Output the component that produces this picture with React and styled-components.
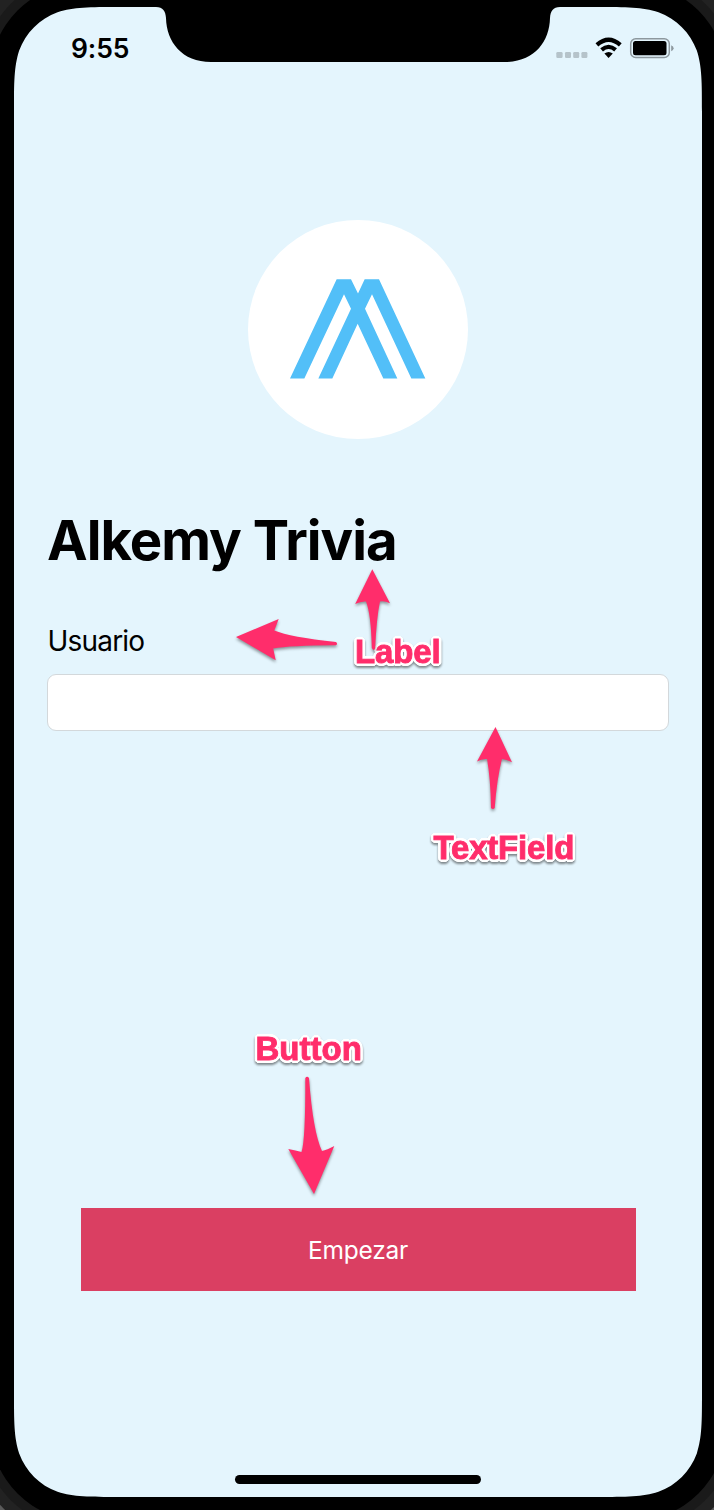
import React from 'react';
import styled, { createGlobalStyle } from 'styled-components';

const PINK = '#ff2d6b';

// Continuous (superelliptic) corner ratios, as multiples of the corner radius.
const R = 69;
const [a, b, c, d, e, f, g] = [1.5287, 1.0885, 0.8684, 0.6315, 0.0749, 0.3728, 0.1691].map((n) => n * R);
const W = 688;
const H = 1490;
const screenShape = [
  `M0 ${a}C0 ${b} 0 ${c} ${e} ${d}C${g} ${f} ${f} ${g} ${d} ${e}C${c} 0 ${b} 0 ${a} 0`,
  'L142 0C149 0 151.5 4 152 11C152.5 35 168 55 197 55L491 55C520 55 535.5 35 536 11C536.5 4 539 0 546 0',
  `L${W - a} 0C${W - b} 0 ${W - c} 0 ${W - d} ${e}C${W - f} ${g} ${W - g} ${f} ${W - e} ${d}C${W} ${c} ${W} ${b} ${W} ${a}`,
  `L${W} ${H - a}C${W} ${H - b} ${W} ${H - c} ${W - e} ${H - d}C${W - g} ${H - f} ${W - f} ${H - g} ${W - d} ${H - e}C${W - c} ${H} ${W - b} ${H} ${W - a} ${H}`,
  `L${a} ${H}C${b} ${H} ${c} ${H} ${d} ${H - e}C${f} ${H - g} ${g} ${H - f} ${e} ${H - d}C0 ${H - c} 0 ${H - b} 0 ${H - a}Z`,
].join('');

// Round white outline around the note text.
const halo = Array.from({ length: 24 }, (_, i) => {
  const t = (i / 24) * Math.PI * 2;
  return `${(Math.cos(t) * 2.8).toFixed(2)}px ${(Math.sin(t) * 2.8).toFixed(2)}px 0 #fff`;
})
  .concat('0 0 1px #fff')
  .join(', ');

const GlobalStyle = createGlobalStyle`
  * { box-sizing: border-box; }
  body { margin: 0; background: #000; }
`;

const Device = styled.div`
  position: relative;
  z-index: 0;
  width: 714px;
  height: 1510px;
  padding: 7px 12px 13px 14px;
  overflow: hidden;
  font-family: Inter, 'Liberation Sans', sans-serif;
  color: #000;

  &::before {
    content: '';
    position: absolute;
    z-index: -1;
    inset: -17px -12px -11px -10px;
    border-radius: 94px;
    background: #000;
    box-shadow: 0 0 0 9.5px #1a1a1a, 0 0 0 20.5px #222, 0 0 0 60px #5a5a5a;
  }
`;

const Screen = styled.main`
  display: flex;
  flex-direction: column;
  width: ${W}px;
  height: ${H}px;
  background: #e4f5fd;
  clip-path: path('${screenShape}');
`;

const StatusBar = styled.header`
  display: flex;
  justify-content: space-between;
  align-items: center;
  height: 82px;
  padding: 0 28px 0 57px;
`;

const Clock = styled.time`
  font-size: 26.5px;
  font-weight: 600;
  letter-spacing: -0.1px;
`;

const StatusIcons = styled.svg`
  display: block;
  width: 118px;
  height: 24px;
`;

const Logo = styled.svg`
  display: block;
  width: 220px;
  height: 219px;
  margin: 131px 0 0 234px;
  border-radius: 50%;
  background: #fff;
`;

const Content = styled.section`
  display: flex;
  flex-direction: column;
  padding: 0 33px;
`;

const Title = styled.h1`
  margin: 66px 0 0;
  font-size: 54.5px;
  font-weight: 700;
  line-height: 70px;
  letter-spacing: -1px;
`;

const FieldLabel = styled.label`
  margin: 48px 0 0 0.5px;
  font-size: 28px;
  line-height: 36px;
  letter-spacing: -0.8px;
`;

const TextField = styled.input`
  height: 57px;
  margin-top: 15px;
  padding: 0 12px;
  border: 1px solid #d3d8db;
  border-radius: 9px;
  background: #fff;
  font: inherit;
  font-size: 24px;
  outline: none;
`;

const StartButton = styled.button`
  width: 555px;
  height: 83px;
  margin: auto auto 0 66.5px;
  padding: 1px 0 0;
  border: 0;
  background: #da3f62;
  color: #fff;
  font: inherit;
  font-size: 24.5px;
  letter-spacing: -0.25px;
`;

const HomeIndicator = styled.div`
  width: 246px;
  height: 9px;
  margin: 184.5px 0 13px 221px;
  border-radius: 5px;
  background: #000;
`;

const Note = styled.span`
  position: absolute;
  left: ${(p) => p.$x}px;
  top: ${(p) => p.$y}px;
  font: 700 33px/38px 'Liberation Sans', sans-serif;
  letter-spacing: ${(p) => p.$spacing || 0}px;
  color: ${PINK};
  -webkit-text-stroke: 0.9px ${PINK};
  text-shadow: ${halo};
  filter: drop-shadow(0 2px 1.2px rgba(0, 0, 0, 0.45));
  white-space: nowrap;
`;

const Arrows = styled.svg`
  position: absolute;
  inset: 0;
  pointer-events: none;
  filter: drop-shadow(0 2px 1.5px rgba(0, 0, 0, 0.4));
`;

export default function App() {
  return (
    <Device>
      <GlobalStyle />
      <Screen>
        <StatusBar>
          <Clock>9:55</Clock>
          <StatusIcons viewBox="556 36 118 24">
            <g fill="#b5c3ca">
              <rect x="556.3" y="52" width="6.3" height="6" rx="1.3" />
              <rect x="565" y="52" width="6" height="6" rx="1.3" />
              <rect x="573.2" y="52" width="6" height="6" rx="1.3" />
              <rect x="581.4" y="52" width="6" height="6" rx="1.3" />
            </g>
            <g fill="none" stroke="#000" strokeWidth="4.2">
              <path d="M596.9 44.8Q608.6 34.6 620.3 44.8" />
              <path d="M601.6 49.9Q608.6 43.8 615.6 49.9" />
            </g>
            <path d="M604.4 53.6Q608.6 50.2 612.8 53.6L608.6 57.9Z" />
            <rect x="630.7" y="38.7" width="38.6" height="18.8" rx="5" fill="none" stroke="#8d989e" strokeWidth="1.5" />
            <rect x="633" y="41" width="33.5" height="14.2" rx="2.5" />
            <path d="M671.2 45.2Q673.6 46 673.6 48.2T671.2 51.3Z" fill="#8d989e" />
          </StatusIcons>
        </StatusBar>
        <Logo viewBox="24 29.5 660 657">
          <path
            fill="#52bff8"
            d="M150 505L290 207H333L354 250L374 207H417L556 505H514L396 252L375 296L472 505H430L353 341L277 505H235L333 296L312 252L193 505Z"
          />
        </Logo>
        <Content>
          <Title>Alkemy Trivia</Title>
          <FieldLabel htmlFor="user">Usuario</FieldLabel>
          <TextField id="user" />
        </Content>
        <StartButton>Empezar</StartButton>
        <HomeIndicator />
      </Screen>
      <Note $x={355} $y={633} $spacing={-0.1}>Label</Note>
      <Note $x={433.5} $y={829} $spacing={-0.2}>TextField</Note>
      <Note $x={255.5} $y={1030}>Button</Note>
      <Arrows width="714" height="1510" fill={PINK}>
        <path d="M372.3 569.3L390 603.3Q384 600.5 380 601.5Q376.5 618 375.2 648Q374 652 371.8 648Q371 614 366 601.5Q361 601 355.2 604Z" />
        <path d="M236 637L278.7 619L274.3 630.5Q290 637 336 642Q338.2 643.8 336 645.3Q290 645.5 273.2 648.5L275.7 660.3Z" />
        <path d="M495.5 727L512 762.3Q506 759.5 502 759Q497 778 494.7 808Q493 810 491 808Q490.5 778 487 759Q482 758.5 477 761.5Z" />
        <path d="M305.3 1078Q307 1075.5 309 1078Q313 1132 322 1151Q327 1150 334.3 1146L314 1194L288.3 1149Q296 1150.5 301.5 1152Q305.5 1140 305.3 1078Z" />
      </Arrows>
    </Device>
  );
}
